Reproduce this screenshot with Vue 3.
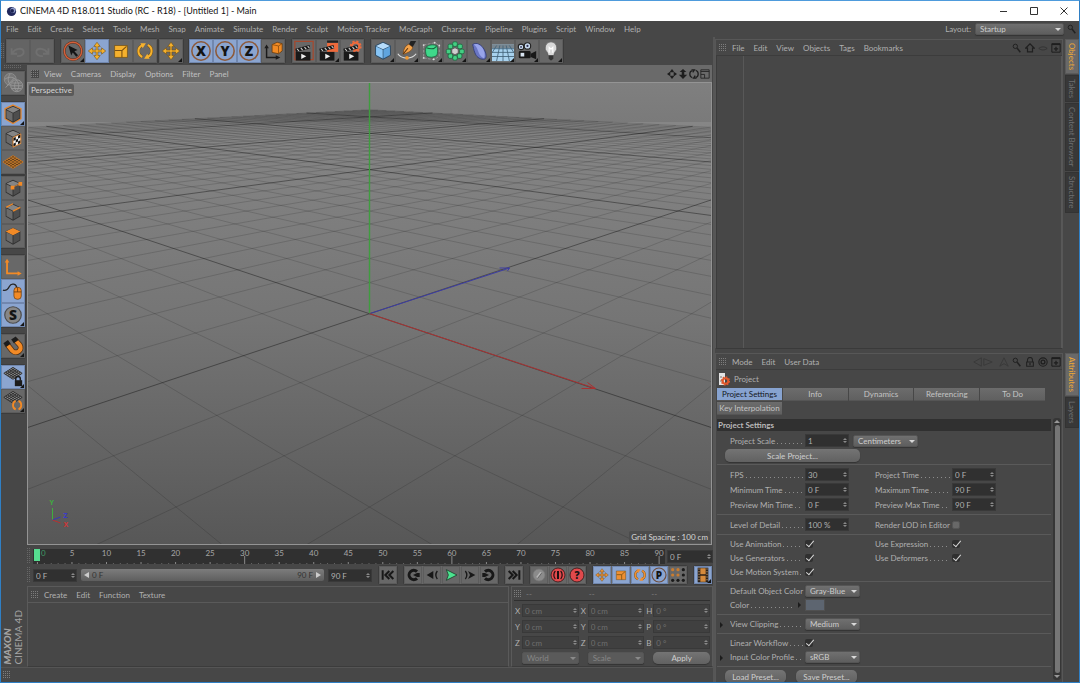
<script setup>
import { ref } from 'vue'

const mainMenu = ['File', 'Edit', 'Create', 'Select', 'Tools', 'Mesh', 'Snap', 'Animate', 'Simulate', 'Render', 'Sculpt', 'Motion Tracker', 'MoGraph', 'Character', 'Pipeline', 'Plugins', 'Script', 'Window', 'Help']
const viewMenu = ['View', 'Cameras', 'Display', 'Options', 'Filter', 'Panel']
const objectMenu = ['File', 'Edit', 'View', 'Objects', 'Tags', 'Bookmarks']
const attributeMenu = ['Mode', 'Edit', 'User Data']
const materialMenu = ['Create', 'Edit', 'Function', 'Texture']

const t = (icon, label, on = false, more = false) => ({ icon, label, on, more })
const toolGroups = [
  { key: 'history', items: [t('undo', 'Undo'), t('redo', 'Redo')] },
  { key: 'tools', items: [t('select', 'Live Selection', false, true), t('move', 'Move', true), t('scale', 'Scale'), t('rotate', 'Rotate')] },
  { key: 'last', items: [t('move', 'Last tool', false, true)] },
  { key: 'axes', items: [t('x', 'Lock X', true), t('y', 'Lock Y', true), t('z', 'Lock Z', true), t('coord', 'Coordinate system')] },
  { key: 'render', items: [t('clap-view', 'Render view'), t('clap-pic', 'Render to picture viewer', false, true), t('clap-set', 'Render settings')] },
  { key: 'create', items: [t('cube', 'Cube', false, true), t('pen', 'Pen', false, true), t('subdiv', 'Subdivision surface', false, true), t('array', 'Array', false, true), t('bend', 'Deformer', false, true), t('floor', 'Floor', false, true), t('camera', 'Camera', false, true), t('light', 'Light', false, true)] }
]
const sideGroups = [
  { key: 's0', items: [t('globe', 'Make editable')] },
  { key: 's1', items: [t('model', 'Model mode', true, true), t('texture', 'Texture mode'), t('plane', 'Workplane mode')] },
  { key: 's2', items: [t('points', 'Points'), t('edges', 'Edges'), t('polys', 'Polygons')] },
  { key: 's3', items: [t('axis', 'Enable axis'), t('mouse', 'Tweak', true), t('solo', 'Viewport solo', true, true)] },
  { key: 's4', items: [t('magnet', 'Snap', false, true)] },
  { key: 's5', items: [t('gridlock', 'Lock workplane', true, true), t('gridturn', 'Planar workplane', false, true)] }
]
const playGroups = [
  { key: 'p0', items: [t('first', 'Go to start')] },
  { key: 'p1', items: [t('prevkey', 'Previous key'), t('prevframe', 'Previous frame'), t('play', 'Play'), t('nextframe', 'Next frame'), t('nextkey', 'Next key')] },
  { key: 'p2', items: [t('last', 'Go to end')] },
  { key: 'p3', items: [t('keyoff', 'Record'), t('autokey', 'Autokeying'), t('keysel', 'Keyframe selection')] },
  { key: 'p4', items: [t('move', 'Position', true), t('scale', 'Scale', true), t('rotate', 'Rotation', true), t('param', 'Parameter', true), t('pla', 'Point level')] },
  { key: 'p5', items: [t('film', 'Timeline', true, true)] }
]

const objectTabs = ['Objects', 'Takes', 'Content Browser', 'Structure']
const attributeTabs = ['Attributes', 'Layers']
const settingTabs = ['Project Settings', 'Info', 'Dynamics', 'Referencing', 'To Do', 'Key Interpolation']
const activeTab = ref('Project Settings')

const times = [
  [{ id: 'fps', label: 'FPS', value: '30' }, { id: 'ptime', label: 'Project Time', value: '0 F' }],
  [{ id: 'tmin', label: 'Minimum Time', value: '0 F' }, { id: 'tmax', label: 'Maximum Time', value: '90 F' }],
  [{ id: 'pmin', label: 'Preview Min Time', value: '0 F' }, { id: 'pmax', label: 'Preview Max Time', value: '90 F' }]
]
const switches = [
  [{ id: 'anim', label: 'Use Animation' }, { id: 'expr', label: 'Use Expression' }],
  [{ id: 'gen', label: 'Use Generators' }, { id: 'def', label: 'Use Deformers' }],
  [{ id: 'motion', label: 'Use Motion System' }]
]
const coords = [
  [['X', '0 cm'], ['X', '0 cm'], ['H', '0 °']],
  [['Y', '0 cm'], ['Y', '0 cm'], ['P', '0 °']],
  [['Z', '0 cm'], ['Z', '0 cm'], ['B', '0 °']]
]

// Timeline scale, in percent of the ruler's width
const framePos = (f) => (0.7 + f * 1.093).toFixed(3) + '%'
const frames = Array.from({ length: 91 }, (_, i) => i)
const labelled = frames.filter((f) => f % 5 === 0)

// Perspective projection of the floor grid seen along its diagonal
const project = (a, b) => {
  const d = (a + b) / 2 + 6.742
  return [370 + (724 * (a - b)) / 2 / d, 72.6 + 1625.4 / d]
}
const FAR = 37
const buildGrid = (major) => {
  let path = ''
  for (let i = -7; i <= FAR; i++) {
    if ((i % 10 === 0) !== major) continue
    const near = 2 * (2.4 - 6.742) - i
    for (const [p, q] of [[project(i, near), project(i, FAR)], [project(near, i), project(FAR, i)]]) {
      path += `M${p[0].toFixed(1)} ${p[1].toFixed(1)}L${q[0].toFixed(1)} ${q[1].toFixed(1)}`
    }
  }
  return path
}
const minorGrid = buildGrid(false)
const majorGrid = buildGrid(true)
</script>

<template>
  <svg class="sprite" aria-hidden="true">
    <defs>
      <symbol id="undo" viewBox="0 0 24 24"><path d="M5 9v6h6M5.500 14.500C9 9 17 8 18 12s-3 6-7 5.500" fill="none" stroke="#707070" stroke-width="2" /></symbol>
      <symbol id="redo" viewBox="0 0 24 24"><path d="M19 9v6h-6M18.500 14.500C15 9 7 8 6 12s3 6 7 5.500" fill="none" stroke="#707070" stroke-width="2" /></symbol>
      <symbol id="select" viewBox="0 0 24 24"><circle cx="12" cy="12" r="9.500" fill="none" stroke="#5a3020" stroke-width="2.600" /><circle cx="12" cy="12" r="9.500" fill="none" stroke="#d4603a" stroke-width="1.500" /><path d="M7 6l10 5-3.500 1.200 4 4.500-2 1.600-3.700-4.600L10 17z" fill="#151515" /></symbol>
      <symbol id="move" viewBox="0 0 24 24"><path d="M12 2.500l3.500 4.500H13v4h4V8.500l4.500 3.500-4.500 3.500V13h-4v4h2.500L12 21.500l-3.500-4.500H11v-4H7v2.500L2.500 12l4.500-3.500V11h4V7H8.500z" fill="currentColor" stroke="#6b4a10" stroke-width=".6" /></symbol>
      <symbol id="scale" viewBox="0 0 24 24"><path d="M5 6h14v13H5z" fill="currentColor" stroke="#6b4a10" stroke-width=".7" /><path d="M5.500 11.500H13V19M13 11.500L18 7" fill="none" stroke="#7a5010" stroke-width="1.200" /></symbol>
      <symbol id="rotate" viewBox="0 0 24 24"><path d="M9 18.500A7 7 0 0 1 9 5.700M15 5.500a7 7 0 0 1 0 12.800" fill="none" stroke="#6b4a10" stroke-width="3.200" /><path d="M9 18.500A7 7 0 0 1 9 5.700M15 5.500a7 7 0 0 1 0 12.800" fill="none" stroke="currentColor" stroke-width="2.300" /><path d="M7 3.500h6L9.500 9zM17 20.500h-6l3.500-5.500z" fill="currentColor" /></symbol>
      <symbol id="x" viewBox="0 0 24 24"><circle cx="12" cy="12" r="10" fill="none" stroke="#8d5a3a" stroke-width="1.700" /><text x="12" y="17.500" class="glyph">X</text></symbol>
      <symbol id="y" viewBox="0 0 24 24"><circle cx="12" cy="12" r="10" fill="none" stroke="#8d5a3a" stroke-width="1.700" /><text x="12" y="17.500" class="glyph">Y</text></symbol>
      <symbol id="z" viewBox="0 0 24 24"><circle cx="12" cy="12" r="10" fill="none" stroke="#8d5a3a" stroke-width="1.700" /><text x="12" y="17.500" class="glyph">Z</text></symbol>
      <symbol id="coord" viewBox="0 0 24 24"><path d="M5 8v11h11" fill="none" stroke="#1b1b1b" stroke-width="1.600" /><path d="M2.500 9L5 5l2.500 4zM15 16.500l5 2.500-5 2.500z" fill="#1b1b1b" /><path d="M11 5l5.500-2.500L22 4v8l-4 3-7-1.500z" fill="#f08a24" stroke="#5a3510" stroke-width=".8" /><path d="M11 5l7 1.500V15M18 6.500L22 4" fill="none" stroke="#8c4c0d" stroke-width=".9" /></symbol>
      <symbol id="clapper" viewBox="0 0 24 24"><path d="M3 13h16v9.500H3z" fill="#191919" /><path d="M2.500 9.500L18 5.500l.8 3.700-15.500 3.800z" fill="#191919" /><path d="M4.500 9.700l2 2.300M8.500 8.700l2 2.300M12.500 7.700l2 2.300M16 6.800l2 2.200" stroke="#cfcfcf" stroke-width="1.200" /><path d="M9 15l5.500 2.800L9 20.600z" fill="#eee" /></symbol>
      <symbol id="clap-view" viewBox="0 0 24 24"><path d="M2 1.500h20v20H2z" fill="none" stroke="#a3492f" stroke-width="1.400" /><use href="#clapper" width="24" height="24" /></symbol>
      <symbol id="clap-pic" viewBox="0 0 24 24"><path d="M11 3h12v10H11z" fill="#ee6a3c" /><path d="M11 .5h12V3H11z" fill="#222" /><use href="#clapper" width="24" height="24" /></symbol>
      <symbol id="clap-set" viewBox="0 0 24 24"><circle cx="16" cy="7" r="4" fill="none" stroke="#ee6a3c" stroke-width="2.400" /><circle cx="16" cy="7" r="5.600" fill="none" stroke="#ee6a3c" stroke-width="1.800" stroke-dasharray="2.400 2" /><use href="#clapper" width="24" height="24" /></symbol>
      <symbol id="cube" viewBox="0 0 24 24"><path d="M12 2.500l8 3.700v10.500L12 21l-8-4.300V6.200z" fill="#2b4a66" stroke="#2b4a66" /><path d="M12 3l7.600 3.500L12 10 4.400 6.500z" fill="#b5dcfb" /><path d="M4.400 7.200L11.700 10.600v9.600L4.400 16.400z" fill="#86c4f5" /><path d="M19.600 7.200L12.400 10.600v9.600l7.200-3.800z" fill="#5fa5df" /></symbol>
      <symbol id="pen" viewBox="0 0 24 24"><path d="M16 1h6l-4 7-4-3z" fill="#222" /><path d="M14 4.500l4.300 3.300c-1 4-4.500 6-10.500 7.700C8 10 10 6 14 4.500z" fill="#f2a24a" stroke="#6a3c12" stroke-width=".7" /><path d="M8 15l5-6" stroke="#4a2a0c" stroke-width="1.100" /><path d="M2 15c4 6 15 6.500 20 0" fill="none" stroke="#dcdcdc" stroke-width="1.300" /><circle cx="12" cy="19.500" r="2" fill="#f09a32" /></symbol>
      <symbol id="subdiv" viewBox="0 0 24 24"><path d="M4 5.500l12-2.500 5 3v12l-6 3.500-11-2z" fill="none" stroke="#a5a5a5" stroke-width=".8" stroke-dasharray="3 1.500" /><path d="M6.500 8c3-3 8.500-3.500 12-1.500 1 3.500 1 8-.3 10.500-3.500 2.300-8 2.300-11 .5-1.300-3-1.500-6.500-.7-9.500z" fill="#3fd88a" stroke="#16603a" stroke-width=".8" /><path d="M7 8.500c2.500 1 5 1.300 8 .9M15 9.400l3-2.400" fill="none" stroke="#16603a" stroke-width="1.200" /><g fill="#ddd"><circle cx="4" cy="5.500" r="1" /><circle cx="16" cy="3" r="1" /><circle cx="21" cy="6" r="1" /><circle cx="4" cy="19.500" r="1" /><circle cx="15" cy="21" r="1" /></g></symbol>
      <symbol id="array" viewBox="0 0 24 24"><g fill="#44cf83" stroke="#17613b" stroke-width=".8"><rect x="9.500" y="2" width="5" height="5" rx="1.500" /><rect x="15" y="4.500" width="5" height="5" rx="1.500" /><rect x="17" y="10" width="5" height="5" rx="1.500" /><rect x="14.500" y="15" width="5" height="5" rx="1.500" /><rect x="9.500" y="17" width="5" height="5" rx="1.500" /><rect x="4.500" y="15" width="5" height="5" rx="1.500" /><rect x="2.500" y="10" width="5" height="5" rx="1.500" /><rect x="4.500" y="4.500" width="5" height="5" rx="1.500" /></g><path d="M12 8.500l3.500 1.700v4L12 16l-3.500-1.800v-4z" fill="#cfcfcf" stroke="#444" stroke-width=".7" /></symbol>
      <symbol id="bend" viewBox="0 0 24 24"><path d="M5 5c4-3 10 0 13 6s2 10-1 10c-5 0-8-3-9.500-7C6 10.500 6 8 5 5z" fill="#6a76c4" stroke="#363f78" stroke-width="1" /><path d="M6 5c4-2 9 1 11 6 1.700 4 1.500 7 .5 9-4-2-5-4-6.500-8S8.500 6.500 6 5z" fill="#98a4ea" /></symbol>
      <symbol id="floor" viewBox="0 0 24 24"><path d="M0 5h24v18H0z" fill="#a8d2ee" /><path d="M0 5h24v4H0z" fill="#788690" /><path d="M0 9.500h24M0 13.500h24M0 18h24M12 6v17M8.500 6L5 23M15.500 6L19 23M5 6L0 14M19 6l5 8" fill="none" stroke="#3f6076" stroke-width=".9" /></symbol>
      <symbol id="camera" viewBox="0 0 24 24"><rect x="3" y="12" width="13" height="8" rx="1.500" fill="#181818" /><path d="M16 15l6-3v9l-6-2.500z" fill="#181818" /><circle cx="5.500" cy="7.500" r="3" fill="#c9dcf0" stroke="#222" stroke-width="1.200" /><circle cx="12.500" cy="6.500" r="3.500" fill="#c9dcf0" stroke="#222" stroke-width="1.200" /><circle cx="5.500" cy="7.500" r="1" fill="#335" /><circle cx="12.500" cy="6.500" r="1.200" fill="#335" /><path d="M5 14h4v4H5z" fill="#d8e4f0" /></symbol>
      <symbol id="light" viewBox="0 0 24 24"><path d="M12 2a6.500 6.500 0 0 1 4 11.500L15 17H9l-1-3.500A6.500 6.500 0 0 1 12 2z" fill="#d9d9d9" stroke="#444" stroke-width=".6" /><path d="M10 14V8l2 2 2-2v6" fill="none" stroke="#fff" stroke-width="1.200" /><path d="M9.500 17h5v3l-1.500 2h-2l-1.500-2z" fill="#333" /></symbol>
      <symbol id="globe" viewBox="0 0 24 24"><circle cx="9" cy="8" r="6.500" fill="#777" stroke="#8e8e8e" /><path d="M3 8c4-3 8-3 12 0M9 2c-3 4-3 8 0 12M4 17l9-10" fill="none" stroke="#999" /><circle cx="16" cy="15" r="6.500" fill="#727272" stroke="#979797" /><path d="M10 15h12M16 9c-3 4-3 8 0 12M16 9c3 4 3 8 0 12M11 12h10M11 18h10" fill="none" stroke="#9a9a9a" stroke-width=".9" /></symbol>
      <symbol id="base" viewBox="0 0 24 24"><path d="M12 3l8 3.800v10L12 21.500l-8-4.700v-10z" fill="#303030" /><path d="M12 4l7 3.200-7 3.400-7-3.400z" fill="#858585" /><path d="M4.800 8l6.700 3.200v9L4.800 16.300z" fill="#6a6a6a" /><path d="M19.200 8l-6.700 3.200v9l6.700-3.900z" fill="#4d4d4d" /></symbol>
      <symbol id="model" viewBox="0 0 24 24"><path d="M12 2.300l8.600 4v10.800L12 22.200l-8.600-5.100V6.300z" fill="none" stroke="#e5862c" stroke-width="1.600" /><use href="#base" width="24" height="24" /></symbol>
      <symbol id="texture" viewBox="0 0 24 24"><use href="#base" width="24" height="24" /><path d="M12 11.500l8.500-4v10.500L12 22z" fill="#f4f4f4" stroke="#e5862c" stroke-width="1" /><path d="M12.500 12l2.500-1.200V14l-2.500 1.200zM17.500 9.500L20 8.300v3.200l-2.500 1.200zM15 14l2.500-1.300v3L15 17zM12.500 18.200L15 17v3l-2.500 1.200zM17.500 15.700L20 14.500v3l-2.500 1.200z" fill="#111" /></symbol>
      <symbol id="plane" viewBox="0 0 24 24"><path d="M12 5l11 7-11 7L1 12z" fill="#5a3a18" stroke="#c87a2a" /><path d="M9.800 6.400l11 7M7.600 7.800l11 7M5.400 9.200l11 7M3.200 10.600l11 7M14.200 6.400l-11 7M16.400 7.800l-11 7M18.600 9.200l-11 7M20.800 10.600l-11 7" stroke="#d5842e" stroke-width=".8" /></symbol>
      <symbol id="points" viewBox="0 0 24 24"><use href="#base" width="24" height="24" /><path d="M12 11l7.500-3.500" stroke="#f28a26" stroke-width=".8" /><path d="M9.500 9.500h4V13.500h-4zM18 5.500h4v4h-4z" fill="#f28a26" /></symbol>
      <symbol id="edges" viewBox="0 0 24 24"><use href="#base" width="24" height="24" /><path d="M4.500 7l7.500-4M12 11l8-4" stroke="#f28a26" stroke-width="1.500" /></symbol>
      <symbol id="polys" viewBox="0 0 24 24"><use href="#base" width="24" height="24" /><path d="M12 3.200l8 3.900-8 4-8-4z" fill="#f28a26" /></symbol>
      <symbol id="axis" viewBox="0 0 24 24"><path d="M5.500 6v13H18" fill="none" stroke="#f28a26" stroke-width="2" /><path d="M3 7l2.500-4L8 7zM17 16.500l4.500 2.500-4.500 2.500z" fill="#f28a26" /></symbol>
      <symbol id="mouse" viewBox="0 0 24 24"><path d="M1 11c3 1 5 0 7-4s8-3 8 2" fill="none" stroke="#262626" stroke-width="1.400" /><rect x="13" y="8" width="8" height="13" rx="3.500" fill="#f28a26" stroke="#6b3d10" stroke-width=".8" /><path d="M13 13h8M17 8v5" stroke="#6b3d10" stroke-width=".9" /></symbol>
      <symbol id="solo" viewBox="0 0 24 24"><circle cx="12" cy="12" r="9" fill="#868686" stroke="#4c4c4c" stroke-width="1.300" /><text x="12" y="17" class="glyph">S</text></symbol>
      <symbol id="magnet" viewBox="0 0 24 24"><path d="M5 9.500l6 7.500c5 5 12-1 8.500-6L14 5" fill="none" stroke="#4f2f12" stroke-width="6" /><path d="M5 9.500l6 7.500c5 5 12-1 8.500-6L14 5" fill="none" stroke="#f28a26" stroke-width="4.400" /><path d="M1.500 9l5-3.500 3 4-5 3.500zM10 5l5-3.500 3 4-5 3.500z" fill="#1c1c1c" /></symbol>
      <symbol id="mesh" viewBox="0 0 24 24"><path d="M12 1.500l10 6.500-10 6.500L2 8z" fill="#8a8a8a" stroke="#2c2c2c" /><path d="M10 2.800l10 6.500M8 4.100l10 6.500M6 5.400l10 6.500M4 6.700l10 6.500M14 2.800L4 9.300M16 4.100L6 10.600M18 5.400L8 11.900M20 6.700L10 13.200" stroke="#2c2c2c" /></symbol>
      <symbol id="gridlock" viewBox="0 0 24 24"><use href="#mesh" width="24" height="24" /><path d="M15 16v-2a2.500 2.500 0 0 1 5 0v2" fill="none" stroke="#1c1c1c" stroke-width="1.600" /><path d="M14 15.500h8V22h-8z" fill="#1c1c1c" /></symbol>
      <symbol id="gridturn" viewBox="0 0 24 24"><use href="#mesh" width="24" height="24" /><path d="M15 12c-4 1-4 8 0 9M18 12c4 1 4 8 0 9" fill="none" stroke="#f28a26" stroke-width="2" /></symbol>
      <symbol id="first" viewBox="0 0 24 24"><path d="M4 5v14M20 6l-6 6 6 6M14 6l-6 6 6 6" fill="none" stroke="#181818" stroke-width="3" /></symbol>
      <symbol id="last" viewBox="0 0 24 24"><path d="M20 5v14M4 6l6 6-6 6M10 6l6 6-6 6" fill="none" stroke="#181818" stroke-width="3" /></symbol>
      <symbol id="prevkey" viewBox="0 0 24 24"><path d="M18 7a7 7 0 1 0 0 10" fill="none" stroke="#181818" stroke-width="4.500" /><path d="M22 9v6h-4l-6-3 6-3z" fill="#181818" /></symbol>
      <symbol id="nextkey" viewBox="0 0 24 24"><path d="M6 7a7 7 0 1 1 0 10" fill="none" stroke="#181818" stroke-width="4.500" /><path d="M2 9v6h4l6-3-6-3z" fill="#181818" /></symbol>
      <symbol id="prevframe" viewBox="0 0 24 24"><path d="M14 6v12L4 12z" fill="#181818" /><path d="M20 6c-3 4-3 8 0 12" fill="none" stroke="#181818" stroke-width="2" /></symbol>
      <symbol id="nextframe" viewBox="0 0 24 24"><path d="M9 6l11 6-11 6 3-6z" fill="#181818" /><path d="M5 6c3 4 3 8 0 12" fill="none" stroke="#181818" stroke-width="2" /></symbol>
      <symbol id="play" viewBox="0 0 24 24"><path d="M5 4l16 8-16 8 3-8z" fill="#4be38f" stroke="#1c3b2a" stroke-width="1.200" /></symbol>
      <symbol id="keyoff" viewBox="0 0 24 24"><circle cx="12" cy="12" r="9" fill="#8b8b8b" stroke="#777" /><path d="M9 16l6-8" stroke="#b5b5b5" stroke-width="3" /><path d="M10 17l6-8" stroke="#555" stroke-width="1.200" /></symbol>
      <symbol id="autokey" viewBox="0 0 24 24"><circle cx="12" cy="12" r="10.500" fill="#e0494c" stroke="#2a1414" stroke-width="1.200" /><path d="M8 6c-3 3-3 9 0 12M16 6c3 3 3 9 0 12" fill="none" stroke="#1c1010" stroke-width="1.800" /><path d="M12 6v12" stroke="#1c1010" stroke-width="3" /></symbol>
      <symbol id="keysel" viewBox="0 0 24 24"><circle cx="12" cy="12" r="10.500" fill="#e0494c" stroke="#2a1414" stroke-width="1.200" /><text x="12" y="18" class="glyph">?</text></symbol>
      <symbol id="param" viewBox="0 0 24 24"><circle cx="12" cy="12" r="10.500" fill="none" stroke="#6e4d3c" stroke-width="1.700" /><text x="12" y="17.500" class="glyph">P</text></symbol>
      <symbol id="pla" viewBox="0 0 24 24"><g fill="#1a1a1a"><circle cx="20" cy="4" r="2.400" /><circle cx="20" cy="12" r="2.400" /><circle cx="4" cy="20" r="2.400" /><circle cx="12" cy="20" r="2.400" /><circle cx="20" cy="20" r="2.400" /></g><g fill="#c97c30"><circle cx="4" cy="4" r="2.400" /><circle cx="12" cy="4" r="2.400" /><circle cx="4" cy="12" r="2.400" /><circle cx="12" cy="12" r="2.400" /></g></symbol>
      <symbol id="film" viewBox="0 0 24 24"><path d="M4 1h16v22H4z" fill="#2a211a" /><path d="M8 2h8v9H8zM8 13h8v9H8z" fill="#d58a3c" /><path d="M6 2v20M18 2v20" stroke="#c9a070" stroke-width="1.400" stroke-dasharray="2 2" /></symbol>
      <symbol id="search" viewBox="0 0 12 12"><circle cx="4" cy="4" r="2.600" fill="none" stroke="#222" stroke-width="1.200" /><path d="M6 6l4 5" stroke="#222" stroke-width="1.800" /></symbol>
      <symbol id="home" viewBox="0 0 12 12"><path d="M1 6l5-5 5 5H9v4.500H3V6z" fill="none" stroke="#202020" stroke-width="1.500" /></symbol>
      <symbol id="eye" viewBox="0 0 12 12"><path d="M1 6.500C4 4 8 4 11 6.500 8 9 4 9 1 6.500z" fill="none" stroke="#303030" stroke-width="1" /></symbol>
      <symbol id="plus" viewBox="0 0 12 12"><path d="M1 1h10v10H1z" fill="none" stroke="#1e1e1e" stroke-width="1.200" /><path d="M1 1.500h10" stroke="#1e1e1e" stroke-width="2" /><path d="M6 4.500v5M3.500 7h5" stroke="#1e1e1e" stroke-width="1.500" /></symbol>
      <symbol id="lock" viewBox="0 0 12 12"><path d="M3 6V3.500a3 3 0 0 1 6 0V6M2 6h8v5H2z" fill="none" stroke="#222" stroke-width="1.300" /><path d="M6 7v3" stroke="#222" stroke-width="1.500" /></symbol>
      <symbol id="target" viewBox="0 0 12 12"><circle cx="6" cy="6" r="5" fill="none" stroke="#1f1f1f" stroke-width="1.300" /><circle cx="6" cy="6" r="2.300" fill="none" stroke="#1f1f1f" stroke-width="1.600" /></symbol>
      <symbol id="history" viewBox="0 0 24 12"><path d="M10 1v10L1 6zM13 2v8l10-4z" fill="none" stroke="#3a3a3a" stroke-width="1.200" /></symbol>
      <symbol id="up" viewBox="0 0 12 12"><path d="M6 1l5 10-5-3-5 3z" fill="none" stroke="#3a3a3a" stroke-width="1.200" /></symbol>
      <symbol id="pan" viewBox="0 0 12 12"><path d="M6 0l3 4H3zM6 12l3-4H3zM0 6l4-3v6zM12 6L8 3v6z" fill="#1e1e1e" /></symbol>
      <symbol id="dolly" viewBox="0 0 12 12"><path d="M6 0l4 3.500H7.500V7H11l-5 5-5-5h3.500V3.500H2z" fill="#1e1e1e" /></symbol>
      <symbol id="orbit" viewBox="0 0 12 12"><path d="M4 10.500A4.700 4.700 0 0 1 4 1.700M8 1.500a4.700 4.700 0 0 1 0 8.800M3 1h3.500L4.500 4M9 11H5.500l2-3" fill="none" stroke="#1e1e1e" stroke-width="1.500" /></symbol>
      <symbol id="maxi" viewBox="0 0 12 12"><path d="M1 1h10v10H1zM1 3h10M1 6.500h4.500V11" fill="none" stroke="#262626" stroke-width="1.100" /></symbol>
    </defs>
  </svg>

  <div class="app">
    <header class="titlebar">
      <svg class="logo" viewBox="0 0 12 12"><circle cx="6" cy="6" r="5" fill="#20285c" /><circle cx="7.500" cy="4.500" r="2.800" fill="#8e9cc8" /><circle cx="6.700" cy="5.300" r="2" fill="#1a2150" /></svg>
      <h1>CINEMA 4D R18.011 Studio (RC - R18) - [Untitled 1] - Main</h1>
      <button class="win" aria-label="Minimize"><svg viewBox="0 0 10 10"><path d="M1 5.500h7" /></svg></button>
      <button class="win" aria-label="Maximize"><svg viewBox="0 0 10 10"><path d="M1.500 1.500h7v7h-7z" /></svg></button>
      <button class="win" aria-label="Close"><svg viewBox="0 0 10 10"><path d="M1.500 1.500l7 7M8.500 1.500l-7 7" /></svg></button>
    </header>

    <nav class="menubar">
      <button v-for="m in mainMenu" :key="m" class="menu">{{ m }}</button>
      <label class="layout-label" for="layout">Layout:</label>
      <span class="pick layout-pick"><select id="layout"><option>Startup</option></select></span>
      <svg class="mini"><use href="#search" /></svg>
    </nav>

    <div class="body">
      <div class="left">
        <div class="toolbar">
          <i class="grip tall"></i>
          <div v-for="g in toolGroups" :key="g.key" class="group" :class="g.key">
            <button v-for="b in g.items" :key="b.label" class="tool" :class="{ on: b.on, more: b.more }" :aria-label="b.label"><svg><use :href="'#' + b.icon" /></svg></button>
          </div>
        </div>

        <div class="work">
          <aside class="side">
            <i class="grip wide"></i>
            <div v-for="g in sideGroups" :key="g.key" class="group column" :class="g.key">
              <button v-for="b in g.items" :key="b.label" class="tool" :class="{ on: b.on, more: b.more }" :aria-label="b.label"><svg><use :href="'#' + b.icon" /></svg></button>
            </div>
            <div class="brand"><b>MAXON</b><span>CINEMA 4D</span></div>
          </aside>

          <main class="main">
            <div class="viewmenu">
              <i class="grip"></i>
              <button v-for="m in viewMenu" :key="m" class="menu">{{ m }}</button>
              <span class="icons"><svg class="mini"><use href="#pan" /></svg><svg class="mini"><use href="#dolly" /></svg><svg class="mini"><use href="#orbit" /></svg><svg class="mini"><use href="#maxi" /></svg></span>
            </div>
            <div class="viewport">
              <svg class="scene" viewBox="28 83 684 461" preserveAspectRatio="xMidYMid slice">
                <defs>
                  <linearGradient id="sky" x1="0" y1="0" x2="0" y2="1"><stop offset="0" stop-color="#828282" /><stop offset="1" stop-color="#7a7a7a" /></linearGradient>
                  <linearGradient id="ground" x1="0" y1="0" x2="0" y2="1"><stop offset="0" stop-color="#868686" /><stop offset=".45" stop-color="#757575" /><stop offset="1" stop-color="#555" /></linearGradient>
                </defs>
                <rect x="0" y="60" width="760" height="63" fill="url(#sky)" />
                <rect x="0" y="122" width="760" height="440" fill="url(#ground)" />
                <path :d="minorGrid" class="minor" />
                <path :d="majorGrid" class="major" />
                <rect x="369.300" y="60" width="1.400" height="253.700" fill="#3f9c3f" />
                <path d="M370 313.700L510 268M500 268h10l-2 3" fill="none" stroke="#3c3ca4" />
                <path d="M370 313.700L596 388.500M582 388.500h14l-8-6" fill="none" stroke="#a83232" />
                <g fill="none"><path d="M52.500 520v-12" stroke="#3fae3f" shape-rendering="crispEdges" /><path d="M53 520l8-3" stroke="#3838b8" /><path d="M53 520l8 3" stroke="#b83030" /></g>
                <g class="gizmo"><text x="50" y="505" fill="#3fae3f">Y</text><text x="64" y="518" fill="#3a3ac8">Z</text><text x="64" y="527" fill="#d03636">X</text></g>
              </svg>
              <span class="tag name">Perspective</span>
              <span class="tag spacing">Grid Spacing : 100 cm</span>
            </div>

            <div class="timeline">
              <i class="grip tall"></i>
              <svg class="ruler">
                <line v-for="f in frames" :key="f" :x1="framePos(f)" :x2="framePos(f)" :y1="f % 30 === 0 && f ? 7 : f % 5 === 0 ? 13 : 14" y2="15" :stroke="f % 5 === 0 ? '#8a8a8a' : '#666'" />
                <text v-for="f in labelled" :key="'n' + f" :x="framePos(f)" :dx="f === 0 ? 6 : 0" y="7" :class="{ now: f === 0 }">{{ f }}</text>
                <rect x="1" y="0" width="6" height="12" fill="#56dc90" />
              </svg>
              <span class="num current"><input aria-label="Current frame" value="0 F" /></span>
            </div>

            <div class="transport">
              <i class="grip tall"></i>
              <span class="num"><input aria-label="Start frame" value="0 F" /></span>
              <div class="range"><span><i class="tri l"></i>0 F</span><span>90 F<i class="tri r"></i></span></div>
              <span class="num"><input aria-label="End frame" value="90 F" /></span>
              <div v-for="g in playGroups" :key="g.key" class="group small">
                <button v-for="b in g.items" :key="b.label" class="tool" :class="{ on: b.on, more: b.more }" :aria-label="b.label"><svg><use :href="'#' + b.icon" /></svg></button>
              </div>
            </div>

            <div class="bottom">
              <section class="materials">
                <div class="panelmenu">
                  <i class="grip"></i>
                  <button v-for="m in materialMenu" :key="m" class="menu">{{ m }}</button>
                </div>
              </section>
              <section class="coords">
                <div class="coordhead"><i class="grip"></i><span>--</span><span>--</span><span>--</span></div>
                <div class="coordgrid">
                  <template v-for="(row, r) in coords" :key="r">
                    <template v-for="(c, i) in row" :key="i">
                      <label :for="'c' + r + i">{{ c[0] }}</label>
                      <span class="num dim"><input :id="'c' + r + i" :value="c[1]" /></span>
                    </template>
                  </template>
                  <span></span><span class="pick dim"><select aria-label="Space"><option>World</option></select></span>
                  <span></span><span class="pick dim"><select aria-label="Size mode"><option>Scale</option></select></span>
                  <span></span><button class="pill">Apply</button>
                </div>
              </section>
            </div>
          </main>
        </div>
        <footer class="status"><i class="grip"></i></footer>
      </div>

      <div class="right">
        <div class="dock objects">
          <section class="panel">
            <div class="panelmenu">
              <i class="grip"></i>
              <button v-for="m in objectMenu" :key="m" class="menu">{{ m }}</button>
              <span class="icons"><svg class="mini"><use href="#search" /></svg><svg class="mini"><use href="#home" /></svg><svg class="mini"><use href="#eye" /></svg><svg class="mini"><use href="#plus" /></svg></span>
            </div>
            <div class="tree"></div>
          </section>
          <div class="tabs"><button v-for="(n, i) in objectTabs" :key="n" :class="{ on: i === 0 }">{{ n }}</button></div>
        </div>

        <div class="dock attributes">
          <section class="panel">
            <div class="panelmenu">
              <i class="grip"></i>
              <button v-for="m in attributeMenu" :key="m" class="menu">{{ m }}</button>
              <span class="icons"><svg class="mini broad"><use href="#history" /></svg><svg class="mini"><use href="#up" /></svg><svg class="mini"><use href="#search" /></svg><svg class="mini"><use href="#lock" /></svg><svg class="mini"><use href="#target" /></svg><svg class="mini"><use href="#plus" /></svg></span>
            </div>
            <div class="project">
              <svg viewBox="0 0 12 14"><path d="M1 1h6v12H1z" fill="#e4e4e4" /><path d="M3 4v2M3 8v2" stroke="#777" /><circle cx="7.500" cy="9" r="2.800" fill="none" stroke="#e0582c" stroke-width="2" /><circle cx="7.500" cy="9" r="4" fill="none" stroke="#e0582c" stroke-width="1.300" stroke-dasharray="1.600 1.500" /></svg>
              Project
            </div>
            <div class="settabs">
              <button v-for="n in settingTabs" :key="n" :class="{ on: n === activeTab }" @click="activeTab = n">{{ n }}</button>
            </div>
            <div class="scroll">
              <div class="form">
                <h2>Project Settings</h2>
                <div class="row tall-row first">
                  <label for="pscale" class="lead">Project Scale</label>
                  <span class="num"><input id="pscale" value="1" /></span>
                  <span class="pick unit"><select aria-label="Unit"><option>Centimeters</option></select></span>
                </div>
                <button class="pill scale-btn">Scale Project...</button>
                <div class="block">
                  <div v-for="(row, r) in times" :key="r" class="row tall-row">
                    <template v-for="f in row" :key="f.id">
                      <label :for="f.id" class="lead">{{ f.label }}</label>
                      <span class="num"><input :id="f.id" :value="f.value" /></span>
                    </template>
                  </div>
                </div>
                <div class="block">
                  <div class="row tall-row">
                    <label for="lod" class="lead">Level of Detail</label>
                    <span class="num"><input id="lod" value="100 %" /></span>
                    <label for="rlod" class="lead">Render LOD in Editor</label>
                    <input id="rlod" type="checkbox" />
                  </div>
                </div>
                <div class="block">
                  <div v-for="(row, r) in switches" :key="r" class="row">
                    <template v-for="f in row" :key="f.id">
                      <label :for="f.id" class="lead">{{ f.label }}</label>
                      <input :id="f.id" type="checkbox" checked />
                    </template>
                  </div>
                </div>
                <div class="block">
                  <div class="row">
                    <label for="doc" class="lead">Default Object Color</label>
                    <span class="pick"><select id="doc"><option>Gray-Blue</option></select></span>
                  </div>
                  <div class="row">
                    <label for="col" class="lead arrowed">Color</label>
                    <button id="col" class="swatch" aria-label="Color"></button>
                  </div>
                </div>
                <div class="block">
                  <div class="row fold">
                    <label for="clip" class="lead">View Clipping</label>
                    <span class="pick"><select id="clip"><option>Medium</option></select></span>
                  </div>
                </div>
                <div class="block">
                  <div class="row">
                    <label for="lin" class="lead">Linear Workflow</label>
                    <input id="lin" type="checkbox" checked />
                  </div>
                  <div class="row fold">
                    <label for="icp" class="lead">Input Color Profile</label>
                    <span class="pick"><select id="icp"><option>sRGB</option></select></span>
                  </div>
                </div>
                <div class="block presets">
                  <button class="pill">Load Preset...</button>
                  <button class="pill">Save Preset...</button>
                </div>
              </div>
              <div class="bar"><i class="end up"></i><i class="thumb"></i><i class="end down"></i></div>
            </div>
          </section>
          <div class="tabs"><button v-for="(n, i) in attributeTabs" :key="n" :class="{ on: i === 0 }">{{ n }}</button></div>
        </div>
      </div>
    </div>
  </div>
</template>

<style>
html, body { margin: 0; background: #474747; }
</style>

<style scoped>
* { box-sizing: border-box; }
.sprite { position: absolute; width: 0; height: 0; }
.glyph { font: 900 15px "Open Sans", sans-serif; text-anchor: middle; fill: #141414; }
.app {
  height: 100vh; display: flex; flex-direction: column; overflow: hidden;
  font: 8px/10px "Lato", "Open Sans", sans-serif; color: #b0b0b0; background: #474747;
  border: 1px solid #2f7fc4; border-top-color: #4e9bdc;
}
button, input, select { font: inherit; color: inherit; margin: 0; padding: 0; border: 0; background: none; border-radius: 0; min-width: 0; }
button { white-space: nowrap; }

.titlebar { height: 20px; flex: none; display: flex; align-items: center; background: #fff; color: #111; padding: 0 0 0 5px; }
.titlebar h1 { flex: 1; margin: 0; font-size: 9px; font-weight: 400; }
.logo { width: 11px; height: 11px; margin-right: 3px; }
.win { width: 30px; height: 20px; display: grid; place-items: center; }
.win svg { width: 10px; height: 10px; fill: none; stroke: #333; }

.menubar { height: 16px; flex: none; display: flex; align-items: center; gap: 9px; padding: 0 2px 0 5px; }
.layout-label { margin-left: auto; margin-right: -5px; }
.mini { width: 10px; height: 10px; flex: none; }
.mini.broad { width: 26px; }
.icons { margin-left: auto; display: flex; gap: 3px; align-items: center; }
.viewmenu .icons { gap: 1px; }

.grip { flex: none; width: 8px; height: 8px; background: repeating-linear-gradient(90deg, transparent 0 1px, #474747 1px 2px), repeating-linear-gradient(#7d7d7d 0 1px, #474747 1px 2px); }
.grip.tall { width: 4px; height: 16px; opacity: .6; }
.grip.wide { width: 18px; height: 4px; opacity: .6; }

.body { flex: 1; min-height: 0; display: flex; }
.left { flex: 1; min-width: 0; display: flex; flex-direction: column; }
.toolbar { height: 28px; flex: none; display: flex; align-items: center; padding-bottom: 1px; }
.group { display: flex; background: #686868; box-shadow: 0 0 0 1px #3c3c3c; border-radius: 2px; }
.group.column { flex-direction: column; }
.tool { position: relative; width: 24px; height: 24px; display: grid; place-items: center; border: 1px solid #5c5c5c; color: #f6b12d; }
.tool svg { width: 22px; height: 22px; }
.tool.on { background: #8ba5d0; border-color: #7187ae; }
.tool.more::after { content: ""; position: absolute; right: 0; bottom: 0; border: 2px solid transparent; border-right-color: #151515; border-bottom-color: #151515; }
.history { margin-left: 1px; background: #646464; }
.tools { margin-left: 7px; }
.last { margin-left: 2px; }
.axes { margin-left: 6px; }
.render { margin-left: 7px; }
.create { margin-left: 7px; }

.work { flex: 1; min-height: 0; display: flex; }
.side { width: 26px; flex: none; display: flex; flex-direction: column; align-items: center; padding: 0 2px 2px 0; }
.side .grip { margin-bottom: 2px; }
.s1, .s3, .s4, .s5 { margin-top: 7px; }
.s2 { margin-top: 2px; }
.brand { margin-top: auto; writing-mode: vertical-rl; transform: rotate(180deg); display: flex; flex-direction: column; font-size: 10px; line-height: 11px; color: #a3a3a3; white-space: nowrap; }
.brand b { font-weight: 900; font-style: italic; }

.main { flex: 1; min-width: 0; display: flex; flex-direction: column; }
.viewmenu { height: 17px; flex: none; display: flex; align-items: center; gap: 9px; padding: 0 2px 0 4px; background: #6a6a6a; color: #c0c0c0; margin-right: 1px; }
.viewmenu .grip, .panelmenu .grip { margin-right: -4px; }
.viewport { position: relative; flex: 1; min-height: 0; border: 1px solid #949494; background: #707070; overflow: hidden; margin-right: 1px; }
.scene { display: block; width: 100%; height: 100%; }
.minor { fill: none; stroke: #000; stroke-opacity: .18; stroke-width: .8; }
.major { fill: none; stroke: #000; stroke-opacity: .42; stroke-width: .9; }
.gizmo { font: 700 7px "Open Sans", sans-serif; }
.tag { position: absolute; padding: 0 2px; background: #5a5a5a; color: #d6d6d6; border-radius: 2px; line-height: 12px; }
.tag.name { left: 1px; top: 1px; }
.tag.spacing { right: 1px; bottom: 1px; background: #4c4c4c; }

.timeline { height: 16px; flex: none; display: flex; align-items: center; gap: 2px; margin-top: 3px; }
.ruler { flex: 1; min-width: 0; height: 15px; background: #303030; }
.ruler text { font-size: 8px; fill: #a6a6a6; text-anchor: middle; }
.ruler .now { fill: #3f9c66; }
.num { position: relative; display: block; width: 44px; height: 13px; background: #303030; border: 1px solid #393939; }
.num.current { width: 46px; }
.num input { display: block; width: 100%; height: 12px; padding: 0 8px 0 2px; line-height: 12px; }
.num::before, .num::after { content: ""; position: absolute; right: 1px; border: 2px solid transparent; }
.num::before { top: 1px; border-bottom-color: #8a8a8a; }
.num::after { bottom: 1px; border-top-color: #8a8a8a; }
.num.dim { width: auto; background: #404040; color: #6f6f6f; }

.transport { height: 22px; flex: none; display: flex; align-items: center; gap: 7px; padding-right: 1px; }
.transport .grip { margin-right: -5px; }
.range { flex: 1; height: 12px; margin: 0 -3px; display: flex; justify-content: space-between; align-items: center; padding: 0 3px; background: linear-gradient(#7c7c7c, #5e5e5e); color: #333; border-radius: 2px; }
.range span { display: flex; align-items: center; gap: 3px; }
.tri { border: 3px solid transparent; }
.tri.l { border-right: 5px solid #ccc; border-left: 0; }
.tri.r { border-left: 5px solid #ccc; border-right: 0; }
.group.small { gap: 1px; }
.group.small .tool { width: 18px; height: 18px; color: #ee8f32; }
.group.small .tool svg { width: 16px; height: 16px; }

.bottom { height: 81px; flex: none; display: flex; gap: 2px; }
.materials { flex: 1; min-width: 0; border: 1px solid #5a5a5a; border-bottom-color: #3c3c3c; }
.panelmenu { height: 16px; flex: none; display: flex; align-items: center; gap: 9px; padding: 0 1px 0 3px; border-bottom: 1px solid #3c3c3c; }
.materials .panelmenu { border-bottom-color: #5a5a5a; }
.coords { width: 202px; flex: none; border: 1px solid #5a5a5a; border-bottom-color: #3c3c3c; }
.coordhead { height: 14px; margin: 0 2px; display: flex; align-items: center; border-bottom: 1px solid #2f2f2f; }
.coordhead span { flex: 1; padding-left: 4px; color: #808080; }
.coordgrid { display: grid; grid-template-columns: 7px 1fr 7px 1fr 7px 1fr; column-gap: 1px; row-gap: 3px; padding: 3px 2px 0; align-items: center; }
.coordgrid label { padding-left: 1px; }
.coordgrid .pill { height: 12px; }

.status { height: 15px; flex: none; display: flex; align-items: center; padding-left: 2px; border-top: 1px solid #555; }

.right { width: 366px; flex: none; display: flex; flex-direction: column; border-left: 2px solid #565656; padding-top: 2px; }
.dock { display: flex; min-height: 0; gap: 2px; }
.objects { flex: 1; }
.attributes { height: 329px; flex: none; margin-top: 4px; }
.panel { flex: 1; min-width: 0; display: flex; flex-direction: column; border: 1px solid #575757; border-bottom-color: #3a3a3a; }
.attributes .panel { border-bottom: 0; }
.tree { flex: 1; position: relative; border-left: 1px solid #3c3c3c; border-right: 1px solid #585858; }
.tree::before { content: ""; display: block; width: 26px; height: 100%; border-right: 1px solid #585858; }
.tabs { width: 14px; flex: none; display: flex; flex-direction: column; align-items: stretch; gap: 1px; }
.tabs button { writing-mode: vertical-rl; padding: 3px 0; background: #383838; color: #707070; border: 1px solid #333; text-align: left; line-height: 12px; }
.tabs .on { background: #696969; color: #f0a936; border-color: #5a5a5a; }

.project { height: 18px; flex: none; display: flex; align-items: center; gap: 4px; padding-left: 2px; }
.project svg { width: 12px; height: 14px; }
.settabs { display: grid; grid-template-columns: repeat(5, 1fr); gap: 1px; margin: 0 17px 3px 1px; }
.settabs button { height: 13px; background: linear-gradient(#6c6c6c, #606060); color: #c4c4c4; border-bottom: 1px solid #555; }
.settabs .on { background: #87a3d0; color: #14171c; }
.scroll { flex: 1; min-height: 0; display: flex; gap: 2px; }
.form { flex: 1; min-width: 0; overflow: hidden; }
.form h2 { margin: 1px 0 0 1px; height: 12px; font-size: 8px; line-height: 12px; background: #303030; color: #bababa; padding-left: 1px; }
.row { position: relative; height: 14px; display: grid; grid-template-columns: 75px 70px 77px 44px; align-items: center; padding-left: 14px; }
.tall-row { height: 15px; }
.row.first { margin-top: 2px; grid-template-columns: 75px 48px 65px; }
.lead { display: flex; align-items: center; white-space: nowrap; overflow: hidden; padding-right: 2px; }
.lead::after { content: ""; flex: 1; height: 1px; margin: 5px 0 0 2px; background: repeating-linear-gradient(90deg, #8c8c8c 0 1px, transparent 1px 4px); }
.block { border-top: 1px solid #5a5a5a; padding: 2px 0; margin-left: 1px; }
.block .row { padding-left: 13px; }
.fold::before { content: ""; position: absolute; left: 3px; top: 5px; border: 3px solid transparent; border-left-color: #1c1c1c; border-right: 0; }
.arrowed::before { content: ""; order: 3; border: 3px solid transparent; border-left-color: #1c1c1c; border-right: 0; margin: 0 2px 0 6px; }
.pick { position: relative; display: block; width: 55px; height: 12px; background: linear-gradient(#707070, #5e5e5e); border: 1px solid #555; border-radius: 2px; box-shadow: 0 1px 1px #333; color: #cdcdcd; }
.pick.unit { width: 65px; }
.pick.layout-pick { width: 89px; margin-right: -6px; }
.pick.dim { width: auto; background: #5a5a5a; color: #868686; }
.pick select { display: block; width: 100%; height: 10px; line-height: 10px; padding: 0 10px 0 4px; appearance: none; }
.pick::after { content: ""; position: absolute; right: 2px; top: 4px; border: 3px solid transparent; border-top-color: #d8d8d8; border-bottom: 0; pointer-events: none; }
.pick.dim::after { border-top-color: #8a8a8a; }
.pill { height: 13px; background: linear-gradient(#747474, #616161); color: #cfcfcf; border-radius: 5px; box-shadow: 0 1px 1px #333; }
.scale-btn { display: block; width: 135px; margin: 1px 0 2px 9px; }
input[type="checkbox"] { appearance: none; position: relative; width: 8px; height: 8px; background: #303030; border-radius: 2px; }
input[type="checkbox"]:not(:checked) { background: #686868; border: 1px solid #555; }
input[type="checkbox"]:checked::after { content: ""; position: absolute; left: 3px; top: -1px; width: 3px; height: 7px; border: solid #d8d8d8; border-width: 0 1px 1px 0; transform: rotate(40deg); }
.swatch { width: 20px; height: 12px; background: #5d6570; border: 1px solid #505050; }
.presets { display: flex; gap: 10px; padding: 3px 0 2px 8px; }
.presets .pill { width: 61px; }
.bar { width: 8px; flex: none; display: flex; flex-direction: column; align-items: center; background: #363636; border-radius: 3px; margin: 0 1px 2px 0; }
.thumb { flex: 1; width: 5px; background: #767676; border-radius: 3px; }
.end { border: 3px solid transparent; margin: 2px 0; }
.end.up { border-bottom-color: #999; border-top: 0; }
.end.down { border-top-color: #999; border-bottom: 0; }
</style>
